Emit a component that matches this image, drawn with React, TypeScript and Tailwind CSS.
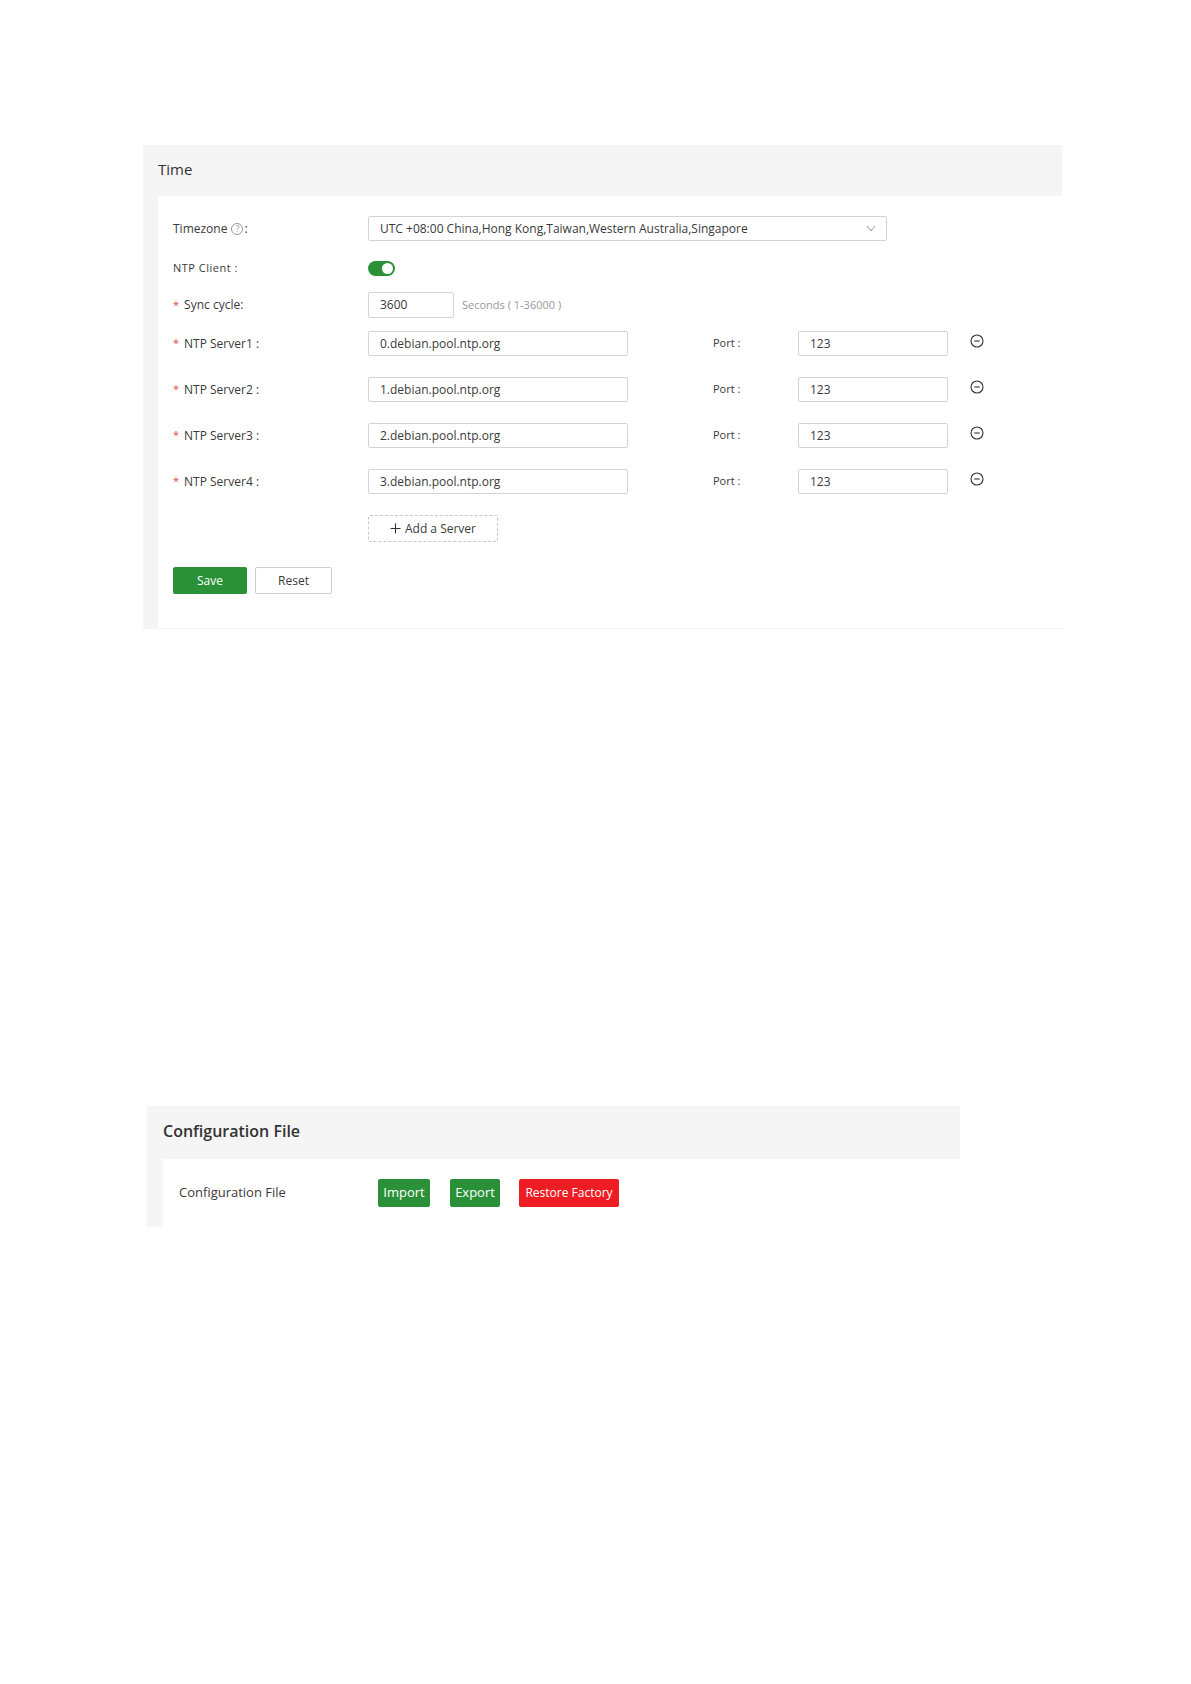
import React from 'react';

const font = { fontFamily: '"Open Sans", "Noto Sans", Arial, sans-serif' };

function Label({ text, required }: { text: string; required?: boolean }) {
    return (
        <div className="w-[195px] shrink-0 flex items-center text-[12px] text-[#3a3a3a]">
            {required && <span className="text-[#e5484d] mr-[5px] text-[11px]">*</span>}
            <span>{text}</span>
        </div>
    );
}

function TextBox({ value, width }: { value: string; width: string }) {
    return (
        <div className={`${width} h-full border border-[#d4d4d4] rounded-[2px] flex items-center pl-[11px] text-[12px] text-[#3a3a3a]`}>
            {value}
        </div>
    );
}

function MinusCircle() {
    return (
        <svg width="14" height="14" viewBox="0 0 14 14" fill="none">
            <circle cx="7" cy="7" r="6" stroke="#333" strokeWidth="1.1" />
            <line x1="4.3" y1="7" x2="9.7" y2="7" stroke="#333" strokeWidth="1.1" />
        </svg>
    );
}

const servers = ['0.debian.pool.ntp.org', '1.debian.pool.ntp.org', '2.debian.pool.ntp.org', '3.debian.pool.ntp.org'];

export default function App() {
    return (
        <div className="w-full min-h-[1684px] bg-white" style={font}>
            {/* Time panel */}
            <div className="ml-[143px] pt-[145px] w-[919px]">
                <div className="bg-[#f5f5f5]">
                    <div className="h-[51px] flex items-center pl-[15px] pb-[2px] text-[15px] text-[#333]">Time</div>
                    <div className="ml-[15px] bg-white pl-[15px] pt-[20px] pb-[34px] border-b border-[#f3f3f3]">
                        {/* timezone */}
                        <div className="flex h-[25px]">
                            <div className="w-[195px] shrink-0 flex items-center text-[12px] text-[#3a3a3a]">
                                <span>Timezone</span>
                                <span className="ml-[4px] mr-[1px] w-[12px] h-[12px] rounded-full border border-[#999] text-[9px] leading-none text-[#999] flex items-center justify-center">?</span>
                                <span>:</span>
                            </div>
                            <div className="w-[519px] h-full border border-[#d4d4d4] rounded-[2px] flex items-center justify-between pl-[11px] pr-[10px] text-[12px] text-[#3a3a3a]">
                                <span>UTC +08:00 China,Hong Kong,Taiwan,Western Australia,Singapore</span>
                                <svg width="10" height="7" viewBox="0 0 10 7" fill="none">
                                    <path d="M1 1 L5 6 L9 1" stroke="#999" strokeWidth="1" />
                                </svg>
                            </div>
                        </div>
                        {/* ntp client */}
                        <div className="flex h-[15px] mt-[20px]">
                            <div className="w-[195px] shrink-0 flex items-center text-[11px] tracking-[0.5px] text-[#3a3a3a]">NTP Client :</div>
                            <div className="w-[27px] h-[15px] rounded-full bg-[#2a9138] flex items-center justify-end pr-[2px]">
                                <div className="w-[11px] h-[11px] rounded-full bg-white" />
                            </div>
                        </div>
                        {/* sync cycle */}
                        <div className="flex h-[26px] mt-[16px]">
                            <Label text="Sync cycle:" required />
                            <TextBox value="3600" width="w-[86px]" />
                            <div className="ml-[8px] flex items-center text-[11px] text-[#999]">Seconds ( 1-36000 )</div>
                        </div>
                        {/* servers */}
                        {servers.map((s, i) => (
                            <div key={s} className={`flex h-[25px] ${i === 0 ? 'mt-[13px]' : 'mt-[21px]'}`}>
                                <Label text={`NTP Server${i + 1} :`} required />
                                <TextBox value={s} width="w-[260px]" />
                                <div className="w-[85px] ml-[85px] flex items-center text-[11px] text-[#3a3a3a]">Port :</div>
                                <TextBox value="123" width="w-[150px]" />
                                <div className="ml-[22px] flex items-start pt-[3px]">
                                    <MinusCircle />
                                </div>
                            </div>
                        ))}
                        {/* add server */}
                        <div className="flex h-[27px] mt-[21px]">
                            <div className="w-[195px] shrink-0" />
                            <div className="w-[130px] h-full border border-dashed border-[#c8c8c8] rounded-[2px] flex items-center justify-center gap-[4px] text-[12px] text-[#3a3a3a]">
                                <svg width="11" height="11" viewBox="0 0 11 11" fill="none">
                                    <path d="M5.5 0.5 V10.5 M0.5 5.5 H10.5" stroke="#333" strokeWidth="1.1" />
                                </svg>
                                <span>Add a Server</span>
                            </div>
                        </div>
                        {/* buttons */}
                        <div className="flex h-[27px] mt-[25px] gap-[8px]">
                            <button className="w-[74px] h-full bg-[#2a9138] text-white text-[12px] rounded-[2px]">Save</button>
                            <button className="w-[77px] h-full border border-[#cfcfcf] bg-white text-[#3a3a3a] text-[12px] rounded-[2px]">Reset</button>
                        </div>
                    </div>
                </div>
            </div>

            {/* Configuration File panel */}
            <div className="ml-[147px] mt-[477px] w-[813px]">
                <div className="bg-[#f5f5f5]">
                    <div className="h-[53px] flex items-center pl-[16px] pb-[4px] text-[16px] font-semibold text-[#333]">Configuration File</div>
                    <div className="ml-[16px] bg-white pl-[16px] py-[20px]">
                        <div className="flex h-[28px] items-center">
                            <div className="w-[199px] shrink-0 text-[13px] text-[#3a3a3a]">Configuration File</div>
                            <button className="w-[52px] h-full bg-[#2a9138] text-white text-[13px] rounded-[2px]">Import</button>
                            <button className="ml-[20px] w-[50px] h-full bg-[#2a9138] text-white text-[13px] rounded-[2px]">Export</button>
                            <button className="ml-[19px] w-[100px] h-full bg-[#ee1d23] text-white text-[12px] rounded-[2px]">Restore Factory</button>
                        </div>
                    </div>
                </div>
            </div>
        </div>
    );
}
